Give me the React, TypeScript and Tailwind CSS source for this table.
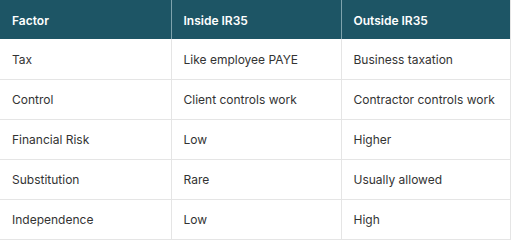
const rows = [
  ['Tax', 'Like employee PAYE', 'Business taxation'],
  ['Control', 'Client controls work', 'Contractor controls work'],
  ['Financial Risk', 'Low', 'Higher'],
  ['Substitution', 'Rare', 'Usually allowed'],
  ['Independence', 'Low', 'High'],
]

export default function App() {
  return (
    <div className="w-[512px] h-[240px] bg-white font-['Inter',sans-serif] text-[12px]">
      <table className="w-[511px] table-fixed border-collapse">
        <thead>
          <tr className="bg-[#1d5565] text-white">
            <th className="h-[39px] w-[171px] border-r border-[#7ea3ad] px-3 pt-[2px] text-left font-semibold">Factor</th>
            <th className="h-[39px] w-[170px] border-r border-[#7ea3ad] px-3 pt-[2px] text-left font-semibold">Inside IR35</th>
            <th className="h-[39px] border-r border-[#e5e5e5] px-3 pt-[2px] text-left font-semibold">Outside IR35</th>
          </tr>
        </thead>
        <tbody className="text-[#333333]">
          {rows.map((r) => (
            <tr key={r[0]}>
              {r.map((c, i) => (
                <td key={i} className="h-[40px] border-r border-b border-[#e5e5e5] px-3 pt-[2px]">
                  {c}
                </td>
              ))}
            </tr>
          ))}
        </tbody>
      </table>
    </div>
  )
}
